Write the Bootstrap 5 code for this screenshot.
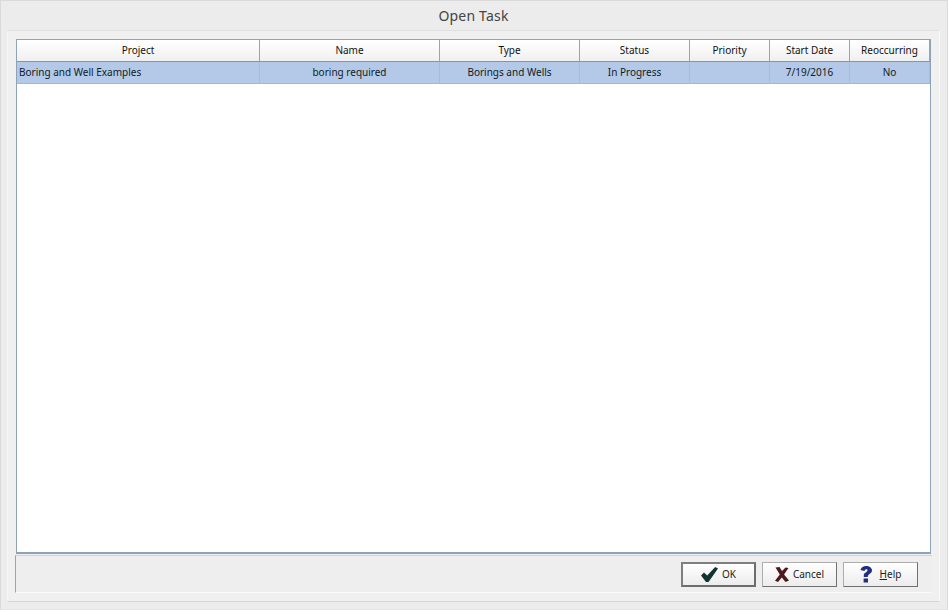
<!DOCTYPE html>
<html lang="en">
<head>
    <meta charset="UTF-8">
    <title>Open Task</title>
    <link rel="stylesheet" href="https://cdn.jsdelivr.net/npm/bootstrap@5.3.0/dist/css/bootstrap.min.css">
    <style>
        html, body { height: 100%; }
        body { background: #ececec; font-family: "Noto Sans", "Liberation Sans", sans-serif; font-size: 10px; color: #1a1a1a; overflow: hidden; }
        .win-frame { height: 610px; border: 1px solid #dadada; border-bottom-color: #e4e4e4; padding: 0 7px 7px 6px; }
        .win-title { height: 29px; font-size: 14px; line-height: 29px; color: #444; letter-spacing: .2px; }
        .win-panel { background: #f0f0f0; border-top: 1px solid #dfdfdf; border-left: 1px solid #f6f6f6; border-right: 1px solid #fafafa; border-bottom: 1px solid #d6d6d6; padding: 8px 8px 8px 8px; }
        .grid-box { height: 515px; background: #fff; border: 1px solid #8ea3b7; border-bottom-width: 2px; }
        .task-grid { table-layout: fixed; width: 913px; margin: 0; border-collapse: separate; border-spacing: 0; }
        .task-grid th { height: 22px; padding: 0; font-weight: 400; font-size: 10px; text-align: center; vertical-align: middle; color: #111; background: linear-gradient(#ffffff, #f0f0f0); border-right: 1px solid #99a4ad; border-bottom: 1px solid #8b949c; }
        .task-grid td { height: 22px; padding: 0; font-size: 10px; text-align: center; vertical-align: middle; color: #111a26; background: #b3c9e7; border-right: 1px solid #a7bcd8; border-bottom: 1px solid #a2b7d3; }
        .task-grid td.cell-left { text-align: left; padding-left: 2px; }
        .button-bar { height: 38px; gap: 6px; margin-top: 1px; margin-left: -1px; margin-right: -1px; border-left: 1px solid #a3a3a3; border-top: 1px solid #d2d2d2; border-bottom: 1px solid #fbfbfb; background: #eeeeee; padding-right: 14px; }
        .dlg-btn { width: 75px; height: 25px; font-size: 10px; color: #222; background: linear-gradient(#ffffff, #ececec); border: 1px solid #adadad; border-right-color: #707070; border-bottom-color: #707070; border-radius: 0; padding: 0; }
        .dlg-btn-default { border: 2px solid #6d6d6d; border-top-color: #7f7f7f; border-left-color: #7f7f7f; }
        .dlg-btn u { text-underline-offset: 1px; }
    </style>
</head>
<body>
    <div class="win-frame d-flex flex-column">
        <div class="win-title text-center">Open Task</div>
        <div class="win-panel">
            <div class="grid-box">
                <table class="task-grid">
                    <colgroup>
                        <col style="width:243px"><col style="width:180px"><col style="width:140px"><col style="width:110px"><col style="width:80px"><col style="width:80px"><col style="width:80px">
                    </colgroup>
                    <thead>
                        <tr><th>Project</th><th>Name</th><th>Type</th><th>Status</th><th>Priority</th><th>Start Date</th><th>Reoccurring</th></tr>
                    </thead>
                    <tbody>
                        <tr><td class="cell-left">Boring and Well Examples</td><td>boring required</td><td>Borings and Wells</td><td>In Progress</td><td></td><td>7/19/2016</td><td>No</td></tr>
                    </tbody>
                </table>
            </div>
            <div class="button-bar d-flex justify-content-end align-items-center">
                <button type="button" class="dlg-btn dlg-btn-default d-flex align-items-center justify-content-center gap-1">
                    <svg width="17" height="15" viewBox="0 0 17 15"><path d="M0 8.5 L3 5.5 L6.2 8.5 L14.2 0 L17 1.5 L7.5 15 L5 15 Z" fill="#12332e"/></svg>OK
                </button>
                <button type="button" class="dlg-btn d-flex align-items-center justify-content-center gap-1">
                    <svg width="14" height="15" viewBox="0 0 14 15"><path d="M0.5 0.5 L4.5 0 L7 4 L10.5 0.5 L13.5 1 L9 7.5 L14 13.5 L10.5 15 L6.8 10.5 L3 15 L0 13.8 L4.8 7.5 Z" fill="#4d1a20"/></svg>Cancel
                </button>
                <button type="button" class="dlg-btn d-flex align-items-center justify-content-center gap-2">
                    <svg width="12" height="17" viewBox="0 0 12 17"><path d="M0.5 4 C1 1.5 3.5 0 6 0 C9.5 0 12 1.8 12 4.5 C12 7.2 8.5 8 7.8 10 L7.8 11 L3.8 11 L3.8 9 C3.8 7 7.5 6 7.5 4.3 C7.5 3 5 2.8 4.5 5 Z M3.6 12.5 L8 12.5 L8 16.5 L3.6 16.5 Z" fill="#232f7e"/></svg><span><u>H</u>elp</span>
                </button>
            </div>
        </div>
    </div>
</body>
</html>
